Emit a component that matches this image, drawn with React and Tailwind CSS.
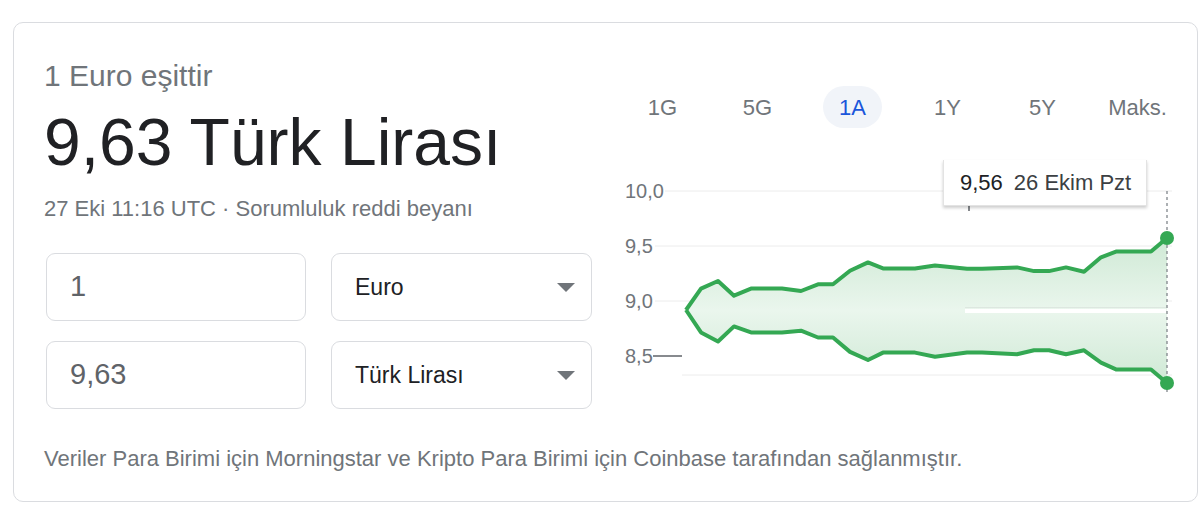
import { useState } from "react";

const ranges = ["1G", "5G", "1A", "1Y", "5Y", "Maks."];

// upper edge of the band, left to right
const upper = [
  [686, 310], [701, 288.6], [718, 281], [734, 295.7], [751, 288.6], [782, 288.6],
  [801, 291], [818, 284.3], [833, 284.3], [850, 270.8], [868, 262.4], [883, 268.4],
  [915, 268.4], [935, 265.4], [967, 268.8], [982, 268.8], [1017, 267.4], [1034, 271.1],
  [1049, 271.1], [1066, 267.4], [1084, 271.8], [1101, 257.3], [1116, 251.6],
  [1151, 251.6], [1167, 238],
];

// lower edge of the band
const lower = [
  [686, 310], [701, 332.4], [718, 341.5], [734, 326.4], [751, 332.4], [782, 332.4],
  [801, 330.7], [818, 337.5], [833, 337.5], [850, 351.9], [868, 360], [883, 352.6],
  [915, 352.6], [935, 356.7], [967, 352.6], [982, 352.6], [1017, 354.3], [1034, 350.3],
  [1049, 350.3], [1066, 354.3], [1084, 350.3], [1101, 362.7], [1116, 369.4],
  [1151, 369.4], [1167, 383],
];

const toPts = (arr) => arr.map(([x, y]) => `${x},${y}`).join(" ");

const yLabels = [
  { label: "10,0", y: 191, from: 665 },
  { label: "9,5", y: 246, from: 655 },
  { label: "9,0", y: 301, from: 655 },
  { label: "8,5", y: 356, from: null },
];

const Caret = () => (
  <svg width="18" height="9" viewBox="0 0 18 9">
    <path d="M0 0h18L9 9z" fill="#70757a" />
  </svg>
);

const RateChart = () => (
  <div className="relative mt-[22px] h-[260px]">
    <svg width="598" height="260" viewBox="600 150 598 260">
      <defs>
        <linearGradient id="band" x1="0" y1="238" x2="0" y2="383" gradientUnits="userSpaceOnUse">
          <stop offset="0" stopColor="#cfe9d5" />
          <stop offset="0.5" stopColor="#eaf6ed" />
          <stop offset="1" stopColor="#cfe9d5" />
        </linearGradient>
      </defs>

      {/* grid */}
      {yLabels.map((l) => (
        <g key={l.label}>
          <text x="625" y={l.y} dominantBaseline="central" fontSize="20" fill="#70757a">
            {l.label}
          </text>
          {l.from && <line x1={l.from} x2="1172" y1={l.y} y2={l.y} stroke="#ececec" strokeWidth="1" />}
        </g>
      ))}
      <line x1="653" x2="682" y1="356" y2="356" stroke="#5f6368" strokeWidth="1.5" />
      <line x1="682" x2="1172" y1="375" y2="375" stroke="#ececec" strokeWidth="1" />

      {/* band */}
      <polygon points={toPts([...upper, ...[...lower].reverse()])} fill="url(#band)" />
      <line x1="965" x2="1166" y1="307.5" y2="307.5" stroke="#dde7e0" strokeWidth="1" />
      <rect x="965" y="309" width="201" height="4" fill="#ffffff" />
      <polyline points={toPts(upper)} fill="none" stroke="#34a853" strokeWidth="4" strokeLinejoin="round" />
      <polyline points={toPts(lower)} fill="none" stroke="#34a853" strokeWidth="4" strokeLinejoin="round" />

      {/* cursor */}
      <line x1="1167" x2="1167" y1="191" y2="395" stroke="#80868b" strokeWidth="1.3" strokeDasharray="3 3" />
      <line x1="969" x2="969" y1="205" y2="211" stroke="#5f6368" strokeWidth="1.5" />
      <circle cx="1167" cy="238" r="7" fill="#34a853" />
      <circle cx="1167" cy="383" r="7" fill="#34a853" />
    </svg>

    {/* hover tooltip */}
    <div className="absolute left-[343px] top-[10px] flex h-[46px] w-[204px] items-center gap-[11px] border-x border-b border-[#e3e3e3] bg-white pl-[16px] text-[22px] shadow-[0_2px_3px_rgba(0,0,0,0.2)]">
      <span className="text-[#202124]">9,56</span>
      <span className="text-[#3c4043]">26 Ekim Pzt</span>
    </div>
  </div>
);

export default function App() {
  const [range, setRange] = useState("1A");

  return (
    <div className="min-h-screen bg-white pl-[13px] pr-[2px] pt-[22px] font-['Liberation_Sans',Arial,sans-serif]">
      <div className="flex h-[480px] w-[1185px] rounded-[10px] border border-[#dadce0]">
        {/* converter */}
        <div className="w-[586px] shrink-0 pl-[30px] pt-[35px]">
          <div className="text-[30px] leading-[36px] text-[#70757a]">1 Euro eşittir</div>
          <div className="mt-[10px] whitespace-nowrap text-[66px] leading-[76px] text-[#202124]">
            9,63 Türk Lirası
          </div>
          <div className="mt-[15px] text-[22px] leading-[28px] text-[#70757a]">
            27 Eki 11:16 UTC · Sorumluluk reddi beyanı
          </div>

          <div className="mt-[30px] ml-[2px] grid grid-cols-[260px_261px] gap-x-[25px] gap-y-[20px]">
            <div className="flex h-[68px] items-center rounded-[9px] border border-[#dadce0] pl-[23px] text-[29px] text-[#5f6368]">
              1
            </div>
            <div className="flex h-[68px] items-center justify-between rounded-[9px] border border-[#dadce0] pl-[23px] pr-[16px] text-[23px] text-[#202124]">
              Euro
              <Caret />
            </div>
            <div className="flex h-[68px] items-center rounded-[9px] border border-[#dadce0] pl-[23px] text-[29px] text-[#5f6368]">
              9,63
            </div>
            <div className="flex h-[68px] items-center justify-between rounded-[9px] border border-[#dadce0] pl-[23px] pr-[16px] text-[23px] text-[#202124]">
              Türk Lirası
              <Caret />
            </div>
          </div>

          <p className="mt-[36px] whitespace-nowrap text-[22px] leading-[28px] text-[#70757a]">
            Veriler Para Birimi için Morningstar ve Kripto Para Birimi için Coinbase tarafından sağlanmıştır.
          </p>
        </div>

        {/* chart */}
        <div className="flex-1">
          <div className="mt-[63px] flex pl-[15px]">
            {ranges.map((r) => (
              <button
                key={r}
                onClick={() => setRange(r)}
                className="flex h-[42px] w-[95px] items-center justify-center text-[22px]"
              >
                <span
                  className={
                    r === range
                      ? "flex h-[42px] items-center rounded-full bg-[#f1f4f9] px-[16px] text-[#1a56db]"
                      : "text-[#70757a]"
                  }
                >
                  {r}
                </span>
              </button>
            ))}
          </div>
          <RateChart />
        </div>
      </div>
    </div>
  );
}
